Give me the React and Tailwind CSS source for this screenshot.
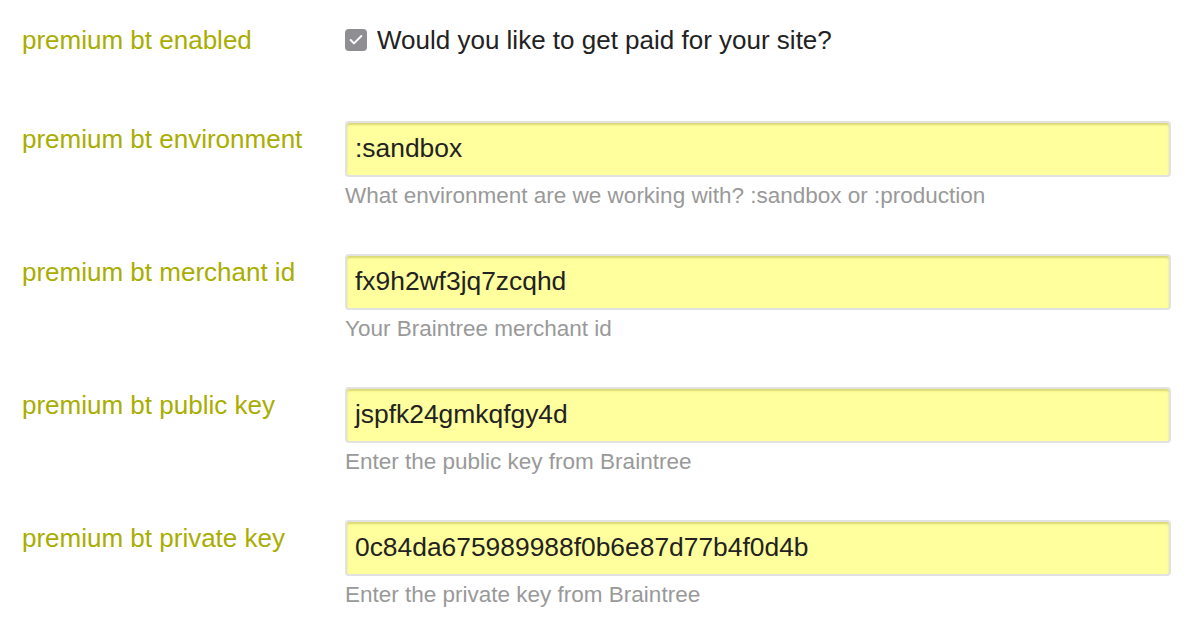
import { Check } from 'lucide-react';

const fields = [
  { label: 'premium bt environment', value: ':sandbox', help: 'What environment are we working with? :sandbox or :production' },
  { label: 'premium bt merchant id', value: 'fx9h2wf3jq7zcqhd', help: 'Your Braintree merchant id' },
  { label: 'premium bt public key', value: 'jspfk24gmkqfgy4d', help: 'Enter the public key from Braintree' },
  { label: 'premium bt private key', value: '0c84da675989988f0b6e87d77b4f0d4b', help: 'Enter the private key from Braintree' },
];

export default function App() {
  return (
    <div className="w-[1194px] h-[622px] bg-white overflow-hidden pt-[25px] font-['Liberation_Sans',Arial,sans-serif]">
      {/* enabled */}
      <div className="flex items-center h-[30px]">
        <div className="w-[345px] pl-[22px] text-[26px] leading-[30px] text-[#a9ad00]">premium bt enabled</div>
        <div className="flex items-center gap-[10px]">
          <span className="w-[22px] h-[22px] rounded-[4px] bg-[#8e8e93] flex items-center justify-center">
            <Check className="w-[16px] h-[16px] text-white" strokeWidth={3} />
          </span>
          <span className="text-[26px] leading-[30px] text-[#222]">Would you like to get paid for your site?</span>
        </div>
      </div>

      <div className="mt-[66px] flex flex-col gap-[46px]">
        {fields.map((f) => (
          <div key={f.label} className="flex">
            <div className="w-[345px] pl-[22px] pt-[4px] text-[26px] leading-[28px] text-[#a9ad00]">{f.label}</div>
            <div className="flex flex-col">
              <div className="w-[826px] h-[56px] rounded-[4px] border-2 border-[#e2e2e2] bg-[#ffff9e] shadow-[inset_0_2px_2px_rgba(150,140,40,0.35)] flex items-center pl-[8px] text-[26.4px] text-[#222]">
                {f.value}
              </div>
              <div className="mt-[7px] text-[22.5px] leading-[24px] text-[#999]">{f.help}</div>
            </div>
          </div>
        ))}
      </div>
    </div>
  );
}
